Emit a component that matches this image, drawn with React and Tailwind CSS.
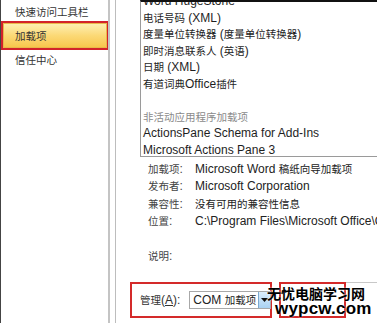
import React from 'react';

// latin text uses Arial widths, CJK runs are set a bit smaller (YaHei-ish)
const T = ({ children, cjk = 'text-[10.5px]' }) => {
  const parts = String(children).split(/([\u3000-\u9fff\uff00-\uffef]+)/);
  return (
    <span>
      {parts.map((p, i) =>
        /[\u3000-\u9fff\uff00-\uffef]/.test(p) ? (
          <span key={i} className={`${cjk} font-['Noto_Sans_CJK_SC',sans-serif]`}>
            {p}
          </span>
        ) : (
          <span key={i}>{p}</span>
        )
      )}
    </span>
  );
};

const navItems = ['快速访问工具栏', '加载项', '信任中心'];

const listItems = [
  { text: 'Word HugeStone' },
  { text: '电话号码 (XML)' },
  { text: '度量单位转换器 (度量单位转换器)' },
  { text: '即时消息联系人 (英语)' },
  { text: '日期 (XML)' },
  { text: '有道词典Office插件' },
  { text: '', blank: true },
  { text: '非活动应用程序加载项', muted: true },
  { text: 'ActionsPane Schema for Add-Ins' },
  { text: 'Microsoft Actions Pane 3' },
];

const details = [
  ['加载项:', 'Microsoft Word 稿纸向导加载项'],
  ['发布者:', 'Microsoft Corporation'],
  ['兼容性:', '没有可用的兼容性信息'],
  ['位置:', 'C:\\Program Files\\Microsoft Office\\Office14\\ADDINS'],
];

const App = () => {
  return (
    <div className="w-[377px] h-[323px] bg-white flex overflow-hidden text-[12px] text-[#222] font-['Liberation_Sans','Noto_Sans_CJK_SC',sans-serif] whitespace-nowrap">
      {/* left nav */}
      <div className="w-[108px] shrink-0 border-l border-[#444] pt-[3px]">
        <div className="h-[18px] pl-[14px] flex items-center text-[#333]">
          <T>{navItems[0]}</T>
        </div>
        <div className="h-[29px] border-2 border-[#d3222a] mr-[-1px]">
          <div className="h-full border border-[#e8b84a] bg-gradient-to-b from-[#fdeeb0] via-[#fbd976] to-[#f8c64c] pl-[11px] flex items-center text-[#333]">
            <T>{navItems[1]}</T>
          </div>
        </div>
        <div className="h-[20px] pl-[14px] flex items-center text-[#333]">
          <T>{navItems[2]}</T>
        </div>
      </div>

      <div className="w-[2px] shrink-0 bg-[#c4c4c4]" />
      <div className="w-[5px] shrink-0 bg-white" />
      <div className="w-[1px] shrink-0 bg-[#bdbdbd]" />

      {/* right side */}
      <div className="flex-1 flex flex-col min-w-0">
        <div className="ml-[24px] h-[157px] shrink-0 border-l border-b border-[#9a9a9a] border-t-2 border-t-[#111] overflow-hidden">
          <div className="mt-[-9px] pl-[2px]">
            {listItems.map((it, i) => (
              <div
                key={i}
                className={`h-[16.5px] leading-[16.5px] ${it.muted ? 'text-[#8a8a8a]' : 'text-[#1e1e1e]'}`}
              >
                <T>{it.text}</T>
              </div>
            ))}
          </div>
        </div>

        <div className="pl-[32px] pt-[3px] overflow-hidden">
          {details.map(([k, v]) => (
            <div key={k} className="flex h-[17.5px] items-center">
              <span className="w-[47px] shrink-0 text-[#444]">
                <T>{k}</T>
              </span>
              <span className="text-[#222]">
                <T>{v}</T>
              </span>
            </div>
          ))}
          <div className="h-[17px]" />
          <div className="h-[17px] flex items-center text-[#444]">
            <T>说明:</T>
          </div>
        </div>

        <div className="mt-[18px] flex items-start">
          <div className="ml-[14px] w-[142px] h-[36px] shrink-0 border-2 border-[#d42a2a] flex items-center pl-[8px]">
            <span className="text-[#333]">
              <T>管理(</T>
              <span className="underline">A</span>
              <T>):</T>
            </span>
            <div className="ml-[9px] flex h-[18px] border border-[#a8a8a8]">
              <div className="w-[68px] pl-[3px] flex items-center text-[#222] bg-white">
                <T>COM 加载项</T>
              </div>
              <div className="w-[12px] bg-gradient-to-b from-[#dceefb] to-[#a9d2f2] border-l border-[#7aa7cf] flex items-center justify-center">
                <svg width="7" height="4" viewBox="0 0 7 4">
                  <path d="M0 0h7L3.5 4z" fill="#111" />
                </svg>
              </div>
            </div>
          </div>
          <div className="ml-[7px] w-[67px] h-[36px] shrink-0 border-2 border-[#d42a2a] relative">
            <div className="absolute left-[-14px] top-[2px] flex flex-col items-start leading-none font-bold text-black">
              <span className="text-[14px] leading-[15px] font-['Noto_Sans_CJK_SC',sans-serif] [text-shadow:0_0_2px_#fff]">
                无忧电脑学习网
              </span>
              <span className="ml-[8px] text-[17px] leading-[16px] tracking-[0.2px] font-['Liberation_Sans',sans-serif] [text-shadow:0_0_2px_#fff]">
                wypcw.com
              </span>
            </div>
          </div>
          <div className="flex-1 h-px bg-[#c8c8c8]" />
        </div>
      </div>
    </div>
  );
};

export default App;
